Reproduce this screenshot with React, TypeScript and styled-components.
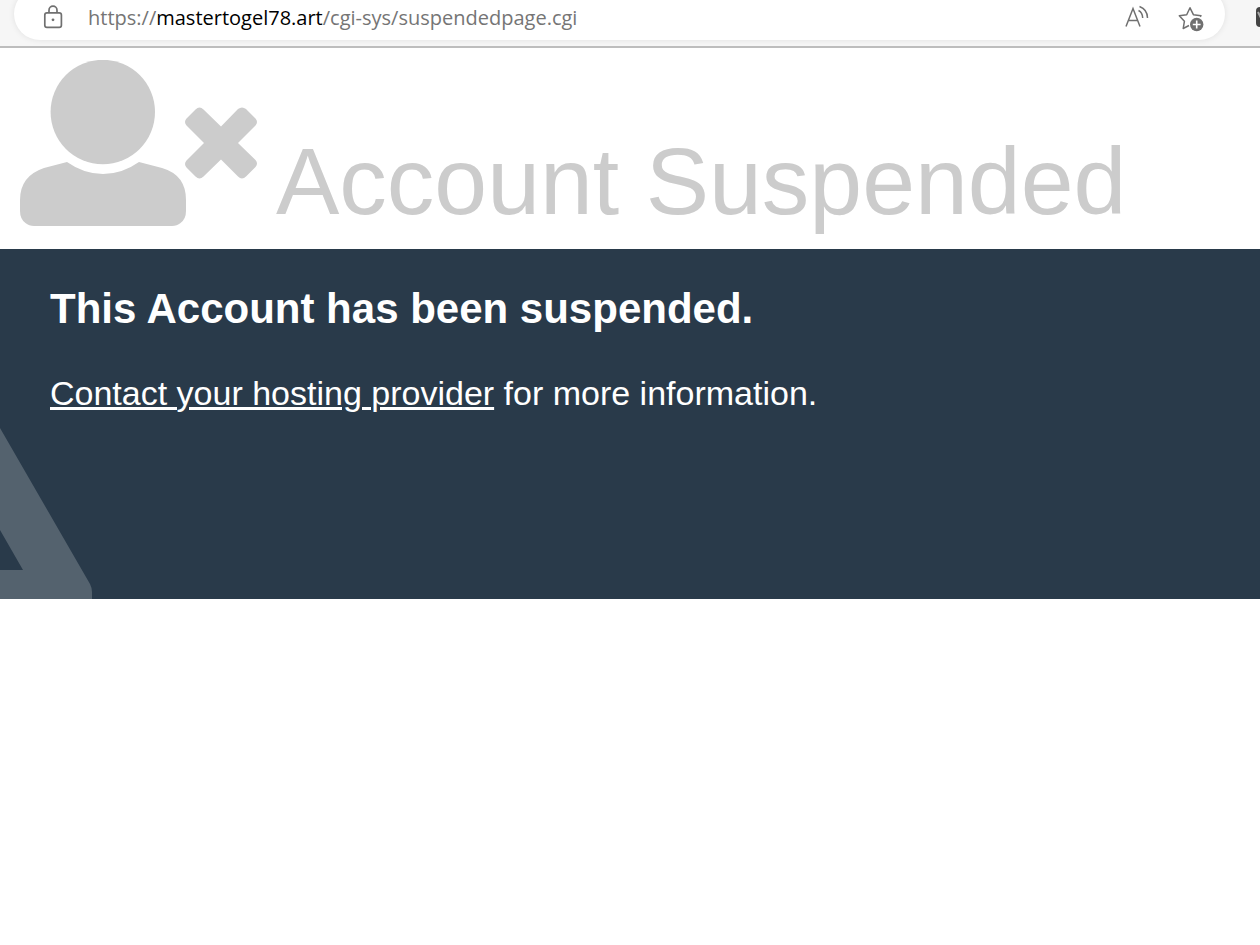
import React from "react";
import styled, { createGlobalStyle } from "styled-components";

const GlobalStyle = createGlobalStyle`
  * { box-sizing: border-box; }
  body {
    margin: 0;
    background: #fff;
    font-family: "Liberation Sans", Arial, Helvetica, sans-serif;
  }
`;

const Toolbar = styled.header`
  display: flex;
  align-items: flex-end;
  gap: 31px;
  height: 48px;
  padding: 0 0 6px 14px;
  background: #f6f6f6;
  border-bottom: 2px solid #bdbdbd;
  overflow: hidden;
`;

const AddressBar = styled.div`
  display: flex;
  flex: 1;
  align-items: center;
  height: 52px;
  padding: 8px 20px 0 26px;
  background: #fff;
  border-radius: 26px;
  box-shadow: 0 0 6px rgba(0, 0, 0, 0.09);
`;

const IconButton = styled.button`
  display: flex;
  flex: none;
  padding: 0;
  border: 0;
  background: none;
  color: #707070;
`;

const Url = styled.div`
  flex: 1;
  padding-left: 22px;
  font: 20px/28px "Open Sans", "Noto Sans", sans-serif;
  color: #757575;
  white-space: nowrap;
`;

const Domain = styled.span`
  color: #000;
`;

const Actions = styled.div`
  display: flex;
  gap: 26px;
`;

const Extension = styled.div`
  display: flex;
  flex: none;
  width: 4px;
  height: 34px;
  overflow: hidden;
`;

const ExtensionIcon = styled.svg`
  flex: none;
`;

const Banner = styled.div`
  display: flex;
  align-items: flex-start;
  gap: 18px;
  min-height: 201px;
  padding: 12px 20px 0;
  color: #ccc;
`;

const UserIcon = styled.svg`
  flex: none;
`;

const Title = styled.h1`
  margin: 0;
  padding-top: 66px;
  font-size: 95px;
  line-height: 110px;
  font-weight: 400;
`;

const Notice = styled.section`
  display: flex;
  flex-direction: column;
  min-height: 350px;
  background: #293a4a;
  color: #fff;
`;

const NoticeText = styled.div`
  flex: 1;
  padding: 36px 50px 0;
`;

const Heading = styled.h2`
  margin: 0 0 36px;
  font-size: 42px;
  line-height: 48px;
`;

const Message = styled.p`
  margin: 0;
  font-size: 34px;
  line-height: 48px;
`;

const ContactLink = styled.a`
  color: inherit;
  text-decoration-thickness: 3px;
`;

const Watermark = styled.svg`
  display: block;
  color: #54626e;
`;

export default function App() {
  return (
    <>
      <GlobalStyle />
      <Toolbar>
        <AddressBar>
          <IconButton aria-label="View site information">
            <svg width="26" height="28" viewBox="0 0 26 28" fill="none" stroke="currentColor" strokeWidth="1.7">
              <rect x="4.800" y="8.800" width="16.600" height="14.600" rx="2.200" />
              <path d="M9 8.800V6.200a4 4 0 0 1 8 0V8.800" />
              <circle cx="13" cy="15.800" r="1.400" fill="currentColor" stroke="none" />
            </svg>
          </IconButton>
          <Url>
            https://<Domain>mastertogel78.art</Domain>/cgi-sys/suspendedpage.cgi
          </Url>
          <Actions>
            <IconButton aria-label="Read aloud">
              <svg width="28" height="28" viewBox="0 0 28 28" fill="none" stroke="currentColor" strokeWidth="1.5">
                <path d="M3 22.500 10 4.500l7 18M5.600 16.500h8.800" />
                <path d="M15.500 6.500q4 2 4.200 7.500M16.500 2.500q8 3 8 11.500" />
              </svg>
            </IconButton>
            <IconButton aria-label="Add this page to favorites">
              <svg width="28" height="28" viewBox="0 0 28 28" fill="none">
                <path
                  d="M12 21.500 6.200 24.500 7.400 17.300 2.300 11.800l7.400-1.100L13 3.800l3.400 6.900 7.600 1.100-1 1"
                  stroke="currentColor"
                  strokeWidth="1.500"
                  strokeLinejoin="round"
                />
                <circle cx="19.700" cy="20.500" r="6.700" fill="currentColor" />
                <path d="M15.800 20.500h7.800M19.700 16.600v7.800" stroke="#fff" strokeWidth="1.600" />
              </svg>
            </IconButton>
          </Actions>
        </AddressBar>
        <Extension aria-hidden="true">
          <ExtensionIcon width="22" height="22" viewBox="0 0 22 22">
            <rect y="1" width="22" height="20" rx="4" fill="#444" />
            <path d="M2 6 7 16 11 8l4 8 5-10" fill="none" stroke="#aaa" strokeWidth="2" />
          </ExtensionIcon>
        </Extension>
      </Toolbar>
      <main>
        <Banner>
          <UserIcon width="238" height="168" viewBox="20 60 238 168" fill="currentColor" aria-hidden="true">
            <circle cx="102.800" cy="112" r="52.200" />
            <path d="M67 162Q84 174 103 174T139 162L162 168Q186 175 186 200V211Q186 219 180.500 223 177 226 172 226H34Q29 226 25.500 223 20 219 20 211V200Q20 176 44 168Z" />
            <path
              d="M199.500 107.500q-2 0-4 2L186.500 118.500q-3 3.500 0 7L204 143 186.500 160.500q-3 3.500 0 7L195.500 176.500q4 4 8 0L221 159.500 238 176.500q4 4 8 0L255.500 167q3-3.500 0-7L238 143 255.500 125.500q3-3.500 0-7L246 109q-4-3-8 0L221 126.500 203.500 109.500q-2-2-4-2Z"
            />
          </UserIcon>
          <Title>Account Suspended</Title>
        </Banner>
        <Notice>
          <NoticeText>
            <Heading>This Account has been suspended.</Heading>
            <Message>
              <ContactLink href="#contact">Contact your hosting provider</ContactLink> for more information.
            </Message>
          </NoticeText>
          <Watermark width="92" height="172" viewBox="0 0 92 172" fill="currentColor" aria-hidden="true">
            <path fillRule="evenodd" d="M0 1 90 157Q92 161 92 165V172H0V143H23L0 103Z" />
          </Watermark>
        </Notice>
      </main>
    </>
  );
}
